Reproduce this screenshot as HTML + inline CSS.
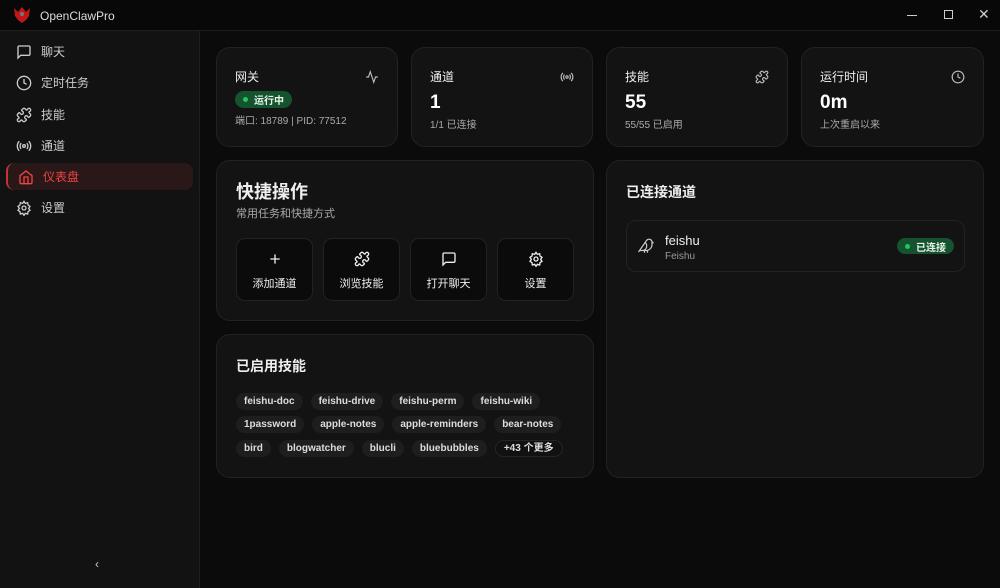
<!DOCTYPE html>
<html><head><meta charset="utf-8"><style>
*{box-sizing:border-box;margin:0;padding:0}
body{width:1000px;height:588px;background:#0b0b0b;font-family:"Liberation Sans","Noto Sans CJK SC",sans-serif;color:#eee;position:relative;overflow:hidden}
.tb{position:absolute;left:0;top:0;width:1000px;height:31px;background:#080808;border-bottom:1px solid #1e1e1e}
.tb .t{position:absolute;left:40px;top:9px;font-size:12px;color:#ddd}
.side{position:absolute;left:0;top:31px;width:200px;height:557px;background:#121212;border-right:1px solid #1f1f1f}
.it{position:absolute;left:6px;width:187px;height:27px;display:flex;align-items:center;font-size:12px;color:#ccc}
.it svg{position:absolute;left:10px}
.it span{position:absolute;left:35px}
.act{background:#2a1718;border-left:2px solid #c2343a;border-radius:8px;color:#ef4444}
.card{position:absolute;background:#131313;border:1px solid #222;border-radius:14px}
.lbl{position:absolute;left:18px;top:20px;font-size:12px;color:#eee}
.ic{position:absolute;right:18px;top:22px}
.big{position:absolute;left:18px;top:44px;font-size:19px;font-weight:bold;color:#fff}
.sub{position:absolute;left:18px;top:68px;font-size:10px;color:#aaa}
.pill{background:#14532d;color:#e8f5ec;border-radius:10px;font-size:10px;font-weight:bold;display:inline-flex;align-items:center;height:17px;padding:0 8px}
.pill i{width:5px;height:5px;border-radius:50%;background:#22c55e;margin-right:6px}
.btn{position:absolute;top:77px;width:77px;height:63px;background:#0b0b0b;border:1px solid #222;border-radius:9px;font-size:11px;color:#eee;text-align:center}
.btn svg{position:absolute;left:30px;top:12px}
.btn span{position:absolute;left:0;right:0;top:36px}
.row{position:absolute;left:19px;display:flex;gap:8px}
.tg{display:block;background:#1e1e1e;border-radius:9px;font-size:10px;font-weight:bold;color:#ddd;height:17px;line-height:17px;padding:0 8px;white-space:nowrap}
</style></head><body>
<svg width="0" height="0" style="position:absolute"><defs><path id="pz" d="M19.439 7.85c-.049.322.059.648.289.878l1.568 1.568c.47.47.706 1.087.706 1.704s-.235 1.233-.706 1.704l-1.611 1.611a.98.98 0 0 1-.837.276c-.47-.07-.802-.48-.968-.925a2.501 2.501 0 1 0-3.214 3.214c.446.166.855.497.925.968a.979.979 0 0 1-.276.837l-1.61 1.61a2.404 2.404 0 0 1-1.705.707 2.402 2.402 0 0 1-1.704-.706l-1.568-1.568a1.026 1.026 0 0 0-.877-.29c-.493.074-.84.504-1.02.968a2.5 2.5 0 1 1-3.237-3.237c.464-.18.894-.527.967-1.020a1.026 1.026 0 0 0-.289-.877l-1.568-1.568A2.402 2.402 0 0 1 1.998 12c0-.617.236-1.234.706-1.704L4.23 8.77c.24-.24.581-.353.917-.303.515.077.877.528 1.073 1.01a2.5 2.5 0 1 0 3.259-3.259c-.482-.196-.933-.558-1.01-1.073-.05-.336.062-.676.303-.917l1.525-1.525A2.402 2.402 0 0 1 12 1.998c.617 0 1.234.236 1.704.706l1.568 1.568c.23.23.556.338.877.29.493-.074.84-.504 1.02-.968a2.5 2.5 0 1 1 3.237 3.237c-.464.18-.894.527-.967 1.020Z"/></defs></svg>
<div class="tb">
<svg style="position:absolute;left:12px;top:6px" width="20" height="18" viewBox="0 0 20 18"><path d="M2 2l4 4 4-5 4 5 4-4-1 8-3 4-4 3-4-3-3-4z" fill="#c01818"/><circle cx="10" cy="8" r="2" fill="#777"/></svg>
<div class="t">OpenClawPro</div>
<div style="position:absolute;left:907px;top:15px;width:10px;height:1px;background:#ccc"></div>
<div style="position:absolute;left:944px;top:10px;width:9px;height:9px;border:1px solid #ccc"></div>
<div style="position:absolute;left:978px;top:6px;font-size:14px;color:#ccc">✕</div>
</div>
<div class="side">
<div class="it" style="top:7px"><svg width="16" height="16" viewBox="0 0 24 24" fill="none" stroke="#ccc" stroke-width="2"><path d="M21 15a2 2 0 0 1-2 2H7l-4 4V5a2 2 0 0 1 2-2h14a2 2 0 0 1 2 2z"/></svg><span>聊天</span></div>
<div class="it" style="top:38px"><svg width="16" height="16" viewBox="0 0 24 24" fill="none" stroke="#ccc" stroke-width="2"><circle cx="12" cy="12" r="10"/><path d="M12 6v6l4 2"/></svg><span>定时任务</span></div>
<div class="it" style="top:70px"><svg width="16" height="16" viewBox="0 0 24 24" fill="none" stroke="#ccc" stroke-width="2"><use href="#pz"/></svg><span>技能</span></div>
<div class="it" style="top:101px"><svg width="16" height="16" viewBox="0 0 24 24" fill="none" stroke="#ccc" stroke-width="2"><path d="M4.9 19.1C1 15.2 1 8.8 4.9 4.9M7.8 16.2c-2.3-2.3-2.3-6.1 0-8.5M16.2 7.8c2.3 2.3 2.3 6.1 0 8.5M19.1 4.9C23 8.8 23 15.1 19.1 19"/><circle cx="12" cy="12" r="2"/></svg><span>通道</span></div>
<div class="it act" style="top:132px"><svg width="16" height="16" viewBox="0 0 24 24" fill="none" stroke="#ef4444" stroke-width="2"><path d="M3 10l9-7 9 7v10a2 2 0 0 1-2 2H5a2 2 0 0 1-2-2z"/><path d="M9 22V12h6v10"/></svg><span>仪表盘</span></div>
<div class="it" style="top:163px"><svg width="16" height="16" viewBox="0 0 24 24" fill="none" stroke="#ccc" stroke-width="2"><circle cx="12" cy="12" r="3"/><path d="M12 2l2 3 3.5-1 .5 3.5 3 2-2 3 2 3-3 2-.5 3.5-3.5-1-2 3-2-3-3.5 1-.5-3.5-3-2 2-3-2-3 3-2 .5-3.5 3.5 1z"/></svg><span>设置</span></div>
<div style="position:absolute;left:95px;top:526px;font-size:12px;color:#ccc">‹</div>
</div>

<div class="card" style="left:216px;top:47px;width:182px;height:100px">
<div class="lbl">网关</div>
<svg class="ic" width="14" height="14" viewBox="0 0 24 24" fill="none" stroke="#bbb" stroke-width="2"><path d="M22 12h-4l-3 9L9 3l-3 9H2"/></svg>
<div style="position:absolute;left:18px;top:43px" class="pill"><i></i>运行中</div>
<div class="sub" style="top:64px">端口: 18789 | PID: 77512</div>
</div>
<div class="card" style="left:411px;top:47px;width:182px;height:100px">
<div class="lbl">通道</div>
<svg class="ic" width="14" height="14" viewBox="0 0 24 24" fill="none" stroke="#bbb" stroke-width="2"><path d="M4.9 19.1C1 15.2 1 8.8 4.9 4.9M7.8 16.2c-2.3-2.3-2.3-6.1 0-8.5M16.2 7.8c2.3 2.3 2.3 6.1 0 8.5M19.1 4.9C23 8.8 23 15.1 19.1 19"/><circle cx="12" cy="12" r="2"/></svg>
<div class="big">1</div><div class="sub">1/1 已连接</div>
</div>
<div class="card" style="left:606px;top:47px;width:182px;height:100px">
<div class="lbl">技能</div>
<svg class="ic" width="14" height="14" viewBox="0 0 24 24" fill="none" stroke="#bbb" stroke-width="2"><use href="#pz"/></svg>
<div class="big">55</div><div class="sub">55/55 已启用</div>
</div>
<div class="card" style="left:801px;top:47px;width:183px;height:100px">
<div class="lbl">运行时间</div>
<svg class="ic" width="14" height="14" viewBox="0 0 24 24" fill="none" stroke="#bbb" stroke-width="2"><circle cx="12" cy="12" r="10"/><path d="M12 6v6l4 2"/></svg>
<div class="big">0m</div><div class="sub">上次重启以来</div>
</div>

<div class="card" style="left:216px;top:160px;width:378px;height:161px">
<div style="position:absolute;left:19px;top:17px;font-size:18px;font-weight:bold">快捷操作</div>
<div style="position:absolute;left:19px;top:44px;font-size:11px;color:#aaa">常用任务和快捷方式</div>
<div class="btn" style="left:19px"><svg width="16" height="16" viewBox="0 0 24 24" fill="none" stroke="#eee" stroke-width="2"><path d="M12 5v14M5 12h14"/></svg><span>添加通道</span></div>
<div class="btn" style="left:106px"><svg width="16" height="16" viewBox="0 0 24 24" fill="none" stroke="#eee" stroke-width="2"><use href="#pz"/></svg><span>浏览技能</span></div>
<div class="btn" style="left:193px"><svg width="16" height="16" viewBox="0 0 24 24" fill="none" stroke="#eee" stroke-width="2"><path d="M21 15a2 2 0 0 1-2 2H7l-4 4V5a2 2 0 0 1 2-2h14a2 2 0 0 1 2 2z"/></svg><span>打开聊天</span></div>
<div class="btn" style="left:280px"><svg width="16" height="16" viewBox="0 0 24 24" fill="none" stroke="#eee" stroke-width="2"><circle cx="12" cy="12" r="3"/><path d="M12 2l2 3 3.5-1 .5 3.5 3 2-2 3 2 3-3 2-.5 3.5-3.5-1-2 3-2-3-3.5 1-.5-3.5-3-2 2-3-2-3 3-2 .5-3.5 3.5 1z"/></svg><span>设置</span></div>
</div>

<div class="card" style="left:216px;top:334px;width:378px;height:144px">
<div style="position:absolute;left:19px;top:21px;font-size:14px;font-weight:bold">已启用技能</div>
<div class="row" style="top:58px"><span class="tg">feishu-doc</span><span class="tg">feishu-drive</span><span class="tg">feishu-perm</span><span class="tg">feishu-wiki</span></div>
<div class="row" style="top:81px"><span class="tg">1password</span><span class="tg">apple-notes</span><span class="tg">apple-reminders</span><span class="tg">bear-notes</span></div>
<div class="row" style="top:105px"><span class="tg">bird</span><span class="tg">blogwatcher</span><span class="tg">blucli</span><span class="tg">bluebubbles</span><span class="tg" style="background:#111;border:1px solid #252525;line-height:15px">+43 个更多</span></div>
</div>

<div class="card" style="left:606px;top:160px;width:378px;height:318px">
<div style="position:absolute;left:19px;top:21px;font-size:14px;font-weight:bold">已连接通道</div>
<div style="position:absolute;left:19px;top:59px;width:339px;height:52px;border:1px solid #222;border-radius:10px">
<svg style="position:absolute;left:10px;top:16px" width="18" height="18" viewBox="0 0 24 24" fill="none" stroke="#ccc" stroke-width="1.6"><path d="M16 7h.01M3.4 18H12a8 8 0 0 0 8-8V7a4 4 0 0 0-7.3-2.3L2 20M20 7l2 .5-2 .5M10 18v3M14 17.8V21M7 18a6 6 0 0 0 3.8-10.6"/></svg>
<div style="position:absolute;left:38px;top:12px;font-size:13px;color:#eee">feishu</div>
<div style="position:absolute;left:38px;top:30px;font-size:10px;color:#999">Feishu</div>
<div class="pill" style="position:absolute;right:10px;top:17px;height:16px">
<i></i>已连接</div>
</div>
</div>
</body></html>
